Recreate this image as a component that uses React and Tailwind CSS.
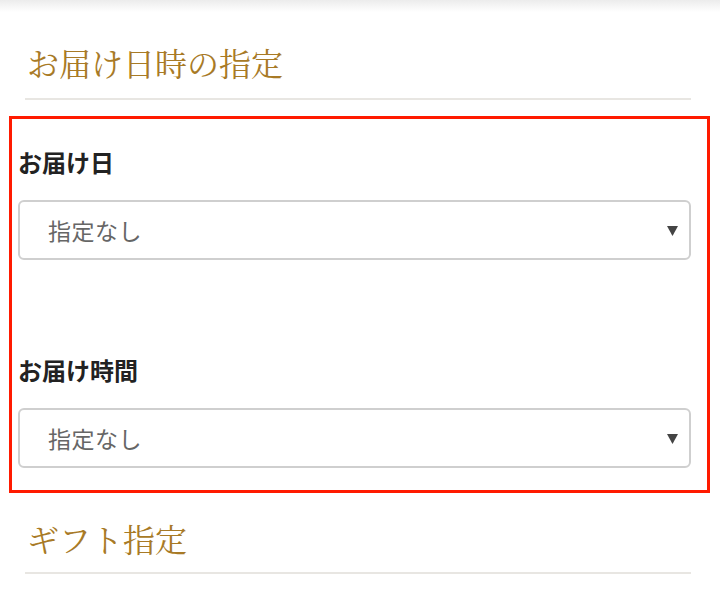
import React from "react";

const Arrow = () => (
  <svg width="11" height="11" viewBox="0 0 11 11" className="shrink-0">
    <polygon points="0,1 11,1 5.5,11" fill="#444444" />
  </svg>
);

const SelectBox = ({ value }) => (
  <div className="flex items-center justify-between h-[60px] rounded-[6px] border-2 border-[#cfcfcf] bg-white pl-[28px] pr-[11px]">
    <span className="text-[23px] leading-none text-[#666666] tracking-[0.5px]">{value}</span>
    <Arrow />
  </div>
);

const SectionTitle = ({ children, className, gap = "mt-[16px]" }) => (
  <div className={`ml-[25px] mr-[29px] ${className}`}>
    <h2
      className="pl-[2px] text-[32px] leading-[40px] text-[#a87a26]"
      style={{ fontFamily: '"Noto Serif CJK JP", "Liberation Serif", "Noto Sans CJK JP", serif' }}
    >
      {children}
    </h2>
    <div className={`${gap} h-[2px] bg-[#e8e6e2]`} />
  </div>
);

export default function App() {
  return (
    <div
      className="w-[720px] h-[600px] bg-white overflow-hidden"
      style={{ fontFamily: '"Noto Sans CJK JP", "Noto Sans", sans-serif' }}
    >
      <div className="h-[12px] bg-gradient-to-b from-[#ececec] to-white" />
      <SectionTitle className="mt-[30px]">お届け日時の指定</SectionTitle>

      <div className="mt-[16px] ml-[9px] mr-[10px] border-[3px] border-[#ff1a00] pl-[6px] pr-[16px] pt-[28px] pb-[22px]">
        <label className="block text-[24px] leading-[30px] font-bold text-[#222]">お届け日</label>
        <div className="mt-[23px]">
          <SelectBox value="指定なし" />
        </div>

        <label className="block mt-[95px] text-[24px] leading-[30px] font-bold text-[#222]">お届け時間</label>
        <div className="mt-[23px]">
          <SelectBox value="指定なし" />
        </div>
      </div>

      <SectionTitle className="mt-[25px]" gap="mt-[14px]">ギフト指定</SectionTitle>
    </div>
  );
}
